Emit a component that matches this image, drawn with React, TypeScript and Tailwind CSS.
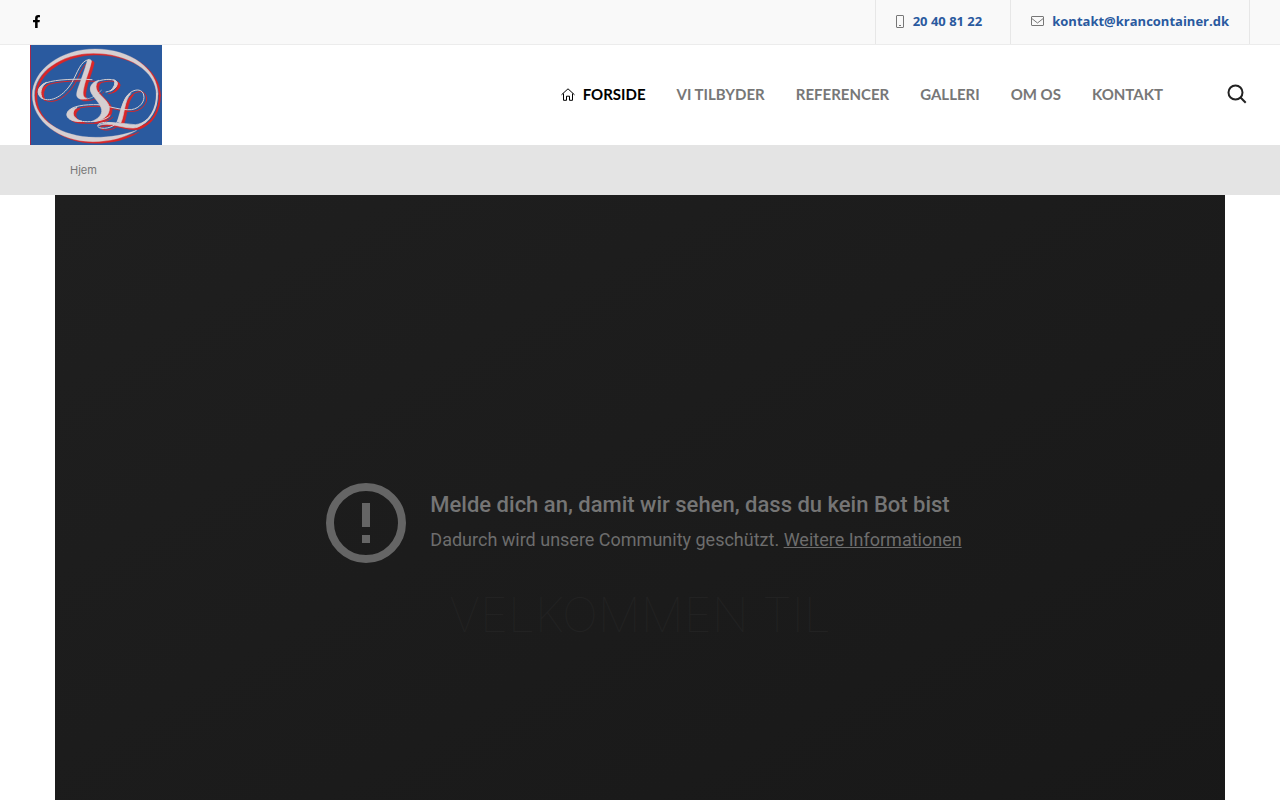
import { FaFacebookF } from 'react-icons/fa';

const navItems = [
  { label: 'VI TILBYDER', href: '#tilbyder' },
  { label: 'REFERENCER', href: '#referencer' },
  { label: 'GALLERI', href: '#galleri' },
  { label: 'OM OS', href: '#om-os' },
  { label: 'KONTAKT', href: '#kontakt' },
];

function PhoneIcon() {
  return (
    <svg width="8" height="13" viewBox="0 0 8 13" fill="none" stroke="#777" aria-hidden="true">
      <rect x="0.5" y="0.5" width="7" height="12" rx="0.5" />
      <path d="M3 10.5h2" />
    </svg>
  );
}

function MailIcon() {
  return (
    <svg width="13" height="11" viewBox="0 0 13 11" fill="none" stroke="#777" aria-hidden="true">
      <rect x="0.5" y="0.5" width="12" height="9" rx="0.5" />
      <path d="M0.8 2.5L6.5 7L12.2 2.5" />
    </svg>
  );
}

function HomeIcon() {
  return (
    <svg width="14" height="13" viewBox="0 0 14 13" fill="none" stroke="#000" aria-hidden="true">
      <path d="M0.5 6.8L7 0.8L13.5 6.8" />
      <path d="M2.5 5.5V12.3H5.5V8.2H8.5V12.3H11.5V5.5" />
    </svg>
  );
}

function SearchIcon() {
  return (
    <svg width="20" height="20" viewBox="0 0 20 20" fill="none" stroke="#222" strokeWidth="2" aria-hidden="true">
      <circle cx="8.5" cy="8.5" r="7" />
      <path d="M13.3 13.3L18.7 18.7" />
    </svg>
  );
}

function Script({ color }: { color: string }) {
  return (
    <g fill={color} stroke={color} strokeLinecap="round" strokeLinejoin="round">
      {/* A */}
      <path
        fill="none"
        strokeWidth="3"
        d="M186 104C140 101 78 103 50 113C22 123 18 148 36 160C64 174 102 152 126 112C142 84 152 46 176 44"
      />
      <path d="M172 46Q180 38 185 48C180 76 164 108 160 138C158 152 163 160 172 159C162 166 142 164 140 152C138 136 154 110 172 46Z" strokeWidth="1" />
      <path d="M50 112C22 122 16 148 38 161C28 146 32 124 50 112Z" strokeWidth="3" />
      <path fill="none" strokeWidth="2" d="M166 162C184 162 200 150 214 136" />
      {/* S */}
      <path
        fill="none"
        strokeWidth="3"
        d="M228 141C252 137 264 122 261 112C254 100 222 102 206 108C190 114 182 124 183 134M240 212C228 226 196 230 172 230C130 230 108 214 113 202C122 182 166 178 204 179"
      />
      <path
        d="M206 106C184 112 176 128 184 144C194 162 212 176 215 194C217 210 204 222 184 230C218 230 240 210 238 188C236 166 204 150 199 132C196 120 201 112 206 106Z"
        strokeWidth="2"
      />
      <path d="M252 105C268 108 264 130 240 138C252 128 258 116 252 105ZM140 188C112 190 100 212 122 224C134 230 148 230 156 229C126 220 122 200 140 188Z" strokeWidth="3" />
      {/* L */}
      <path
        fill="none"
        strokeWidth="3"
        d="M204 179C242 184 270 196 304 194C330 190 346 168 341 150C338 134 320 130 302 142C276 160 276 202 264 226C256 246 226 254 208 248C196 242 206 232 230 232C266 234 292 246 320 244"
      />
      <path fill="none" strokeWidth="6" d="M320 244C360 232 382 190 381 146" />
      <path d="M300 144C278 160 272 198 262 230L272 234C284 212 282 166 302 146ZM206 241C230 226 278 236 316 239C330 238 344 230 350 224C338 240 326 248 310 249C276 250 240 230 206 241Z" strokeWidth="2" />
      {/* ring */}
      <path
        d="M384 148C384 73 302 12 196 12C92 12 7 75 7 151C7 228 88 290 188 290C240 290 286 278 320 256C282 270 242 277 196 277C94 277 13 224 13 151C13 82 94 25 190 25C296 25 379 79 379 148Z"
        strokeWidth="1"
      />
    </g>
  );
}

function Logo() {
  return (
    <svg className="block h-[100px] w-[132px]" viewBox="0 0 396 300" preserveAspectRatio="none" role="img" aria-label="ASL">
      <rect width="396" height="300" fill="#2a5a9f" />
      <rect width="3" height="300" fill="#a52a4c" />
      <g transform="translate(8 5)">
        <Script color="#d82628" />
      </g>
      <Script color="#d5cfd1" />
    </svg>
  );
}

function TopBar() {
  return (
    <div className="flex h-[45px] items-stretch justify-between border-b border-[#ececec] bg-[#f9f9f9] px-[30px]">
      <a href="#facebook" aria-label="Facebook" className="flex items-center pb-px text-black">
        <FaFacebookF className="h-[13px] w-[13px]" />
      </a>
      <div className="flex font-['Open_Sans',sans-serif] text-[13px] font-bold text-[#2a5a9f]">
        <a href="tel:20408122" className="flex items-center gap-[9px] border-l border-[#e7e7e7] pr-7 pb-px pl-5">
          <PhoneIcon />
          20 40 81 22
        </a>
        <a href="mailto:kontakt@krancontainer.dk" className="flex items-center gap-2 border-x border-[#e7e7e7] px-5 pb-px">
          <MailIcon />
          kontakt@krancontainer.dk
        </a>
      </div>
    </div>
  );
}

function Header() {
  return (
    <header className="flex h-[100px] items-center justify-between bg-white px-[30px]">
      <a href="#forside">
        <Logo />
      </a>
      <div className="flex items-center">
        <nav className="flex gap-[31px] pb-0.5 font-[Lato,sans-serif] text-[15px] font-bold whitespace-nowrap text-[#777]">
          <a href="#forside" className="flex items-center gap-2 text-black">
            <HomeIcon />
            FORSIDE
          </a>
          {navItems.map((item) => (
            <a key={item.href} href={item.href}>
              {item.label}
            </a>
          ))}
        </nav>
        <button type="button" aria-label="Søg" className="mr-[3px] ml-16 pb-0.5">
          <SearchIcon />
        </button>
      </div>
    </header>
  );
}

function VideoError() {
  return (
    <div className="flex items-center justify-center gap-6 pb-[3px] pl-2">
      <svg width="80" height="80" viewBox="0 0 80 80" fill="none" aria-hidden="true">
        <circle cx="40" cy="40" r="36" stroke="#656565" strokeWidth="8" />
        <path d="M36 20h8v24h-8zM36 52h8v8h-8z" fill="#656565" />
      </svg>
      <div className="font-[Roboto,sans-serif] text-[#757575]">
        <p className="text-[22px] leading-8 font-medium">Melde dich an, damit wir sehen, dass du kein Bot bist</p>
        <p className="mt-[3px] text-lg leading-8 text-[#6d6d6d]">
          Dadurch wird unsere Community geschützt.{' '}
          <a href="#info" className="underline">
            Weitere Informationen
          </a>
        </p>
      </div>
    </div>
  );
}

export default function App() {
  return (
    <div className="font-[Inter,sans-serif]">
      <TopBar />
      <Header />
      <div className="bg-[#e4e4e4]">
        <div className="mx-auto flex h-[50px] max-w-[1170px] items-center px-[15px] text-[11px] text-[#777]">
          <a href="#forside">Hjem</a>
        </div>
      </div>
      <main className="relative mx-auto flex aspect-video max-w-[1170px] flex-col justify-center bg-linear-to-br from-[#1f1f1f] to-[#181818]">
        <VideoError />
        {/* slide caption, still fading in over the video */}
        <h1 className="absolute inset-x-0 top-[390px] text-center text-5xl leading-[60px] font-thin text-[#222]">
          VELKOMMEN TIL
        </h1>
      </main>
    </div>
  );
}
